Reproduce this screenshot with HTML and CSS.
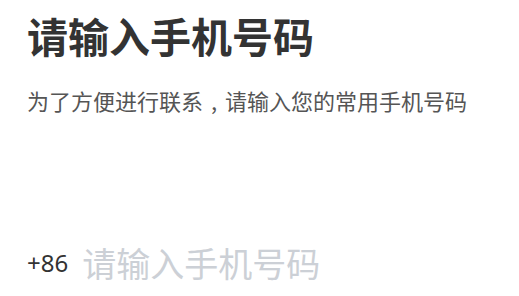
FILE: index.html
```html
<!DOCTYPE html>
<html lang="zh-CN">
<head>
  <meta charset="UTF-8">
  <title>请输入手机号码</title>
  <link rel="stylesheet" href="styles.css">
</head>
<body>
  <div class="login-page">
    <h1 class="title">请输入手机号码</h1>
    <p class="desc">为了方便进行联系<span class="comma">,</span>请输入您的常用手机号码</p>

    <div class="phone-row">
      <span class="area-code">+86</span>
      <input type="tel" class="phone-input" placeholder="请输入手机号码">
    </div>
  </div>
</body>
</html>
```

FILE: styles.css
```css
body {
  margin: 0;
  background-color: #fff;
  font-family: "Noto Sans CJK SC", "Noto Sans", sans-serif;
}

.login-page {
  padding: 11px 28px 0 27px;
}

.title {
  margin: 0;
  font-size: 41px;
  line-height: 48px;
  font-weight: bold;
  color: #333;
}

.desc {
  margin: 27px 0 0 0;
  font-size: 22px;
  line-height: 28px;
  color: #555;
}

/* centred full-width comma */
.desc .comma {
  display: inline-block;
  width: 1em;
  text-align: center;
}

.phone-row {
  display: flex;
  align-items: center;
  margin-top: 124px;
}

.area-code {
  font-family: "Noto Sans", sans-serif;
  font-size: 24px;
  color: #333;
  margin-right: 14px;
}

.phone-input {
  flex: 1;
  border: none;
  outline: none;
  padding: 0;
  font-family: "Noto Sans CJK SC", sans-serif;
  font-size: 34px;
  color: #333;
  background: transparent;
}

.phone-input::placeholder {
  color: #ccd0d6;
}
```
